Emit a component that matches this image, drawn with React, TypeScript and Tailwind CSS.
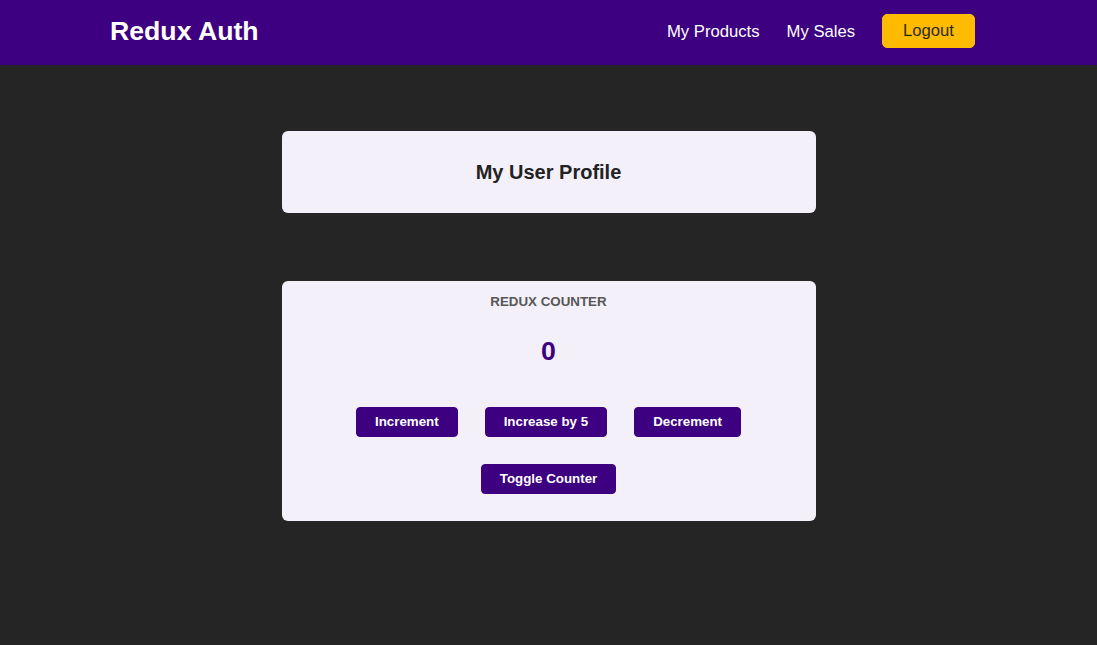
import { useState } from 'react';

export default function App() {
  const [counter, setCounter] = useState(0);
  const [showCounter, setShowCounter] = useState(true);

  return (
    <div className="min-h-screen bg-[#252525] font-['Liberation_Sans',Arial,sans-serif]">
      {/* Header */}
      <header className="h-[65px] w-full bg-[#3c0080] flex items-center justify-between pl-[110px] pr-[122px] pb-[3px]">
        <h1 className="text-[26.67px] font-bold text-white leading-none">Redux Auth</h1>
        <nav>
          <ul className="flex items-center gap-[27px]">
            <li>
              <a href="#" className="text-[16.67px] text-white">My Products</a>
            </li>
            <li>
              <a href="#" className="text-[16.67px] text-white">My Sales</a>
            </li>
            <li>
              <button className="h-[34px] px-[20px] bg-[#ffbb00] border border-[#ffbb00] rounded-[5px] text-[16.67px] text-[#2c2922] leading-none">
                Logout
              </button>
            </li>
          </ul>
        </nav>
      </header>

      <main className="flex flex-col items-center">
        {/* Profile */}
        <section className="mt-[66px] w-[534px] h-[82px] bg-[#f4f0fa] rounded-[6px] flex items-center justify-center">
          <h2 className="text-[20px] font-bold text-[#222] leading-none">My User Profile</h2>
        </section>

        {/* Counter */}
        <section className="mt-[68px] w-[534px] bg-[#f4f0fa] rounded-[6px] pt-[13px] pb-[27px] text-center">
          <h1 className="text-[13.33px] leading-[15px] font-bold uppercase text-[#575757]">Redux Counter</h1>
          <div className="mt-[27px] h-[31px] leading-[31px] text-[26.67px] font-bold text-[#3c0080]">
            {showCounter ? counter : ''}
          </div>
          <div className="mt-[40px] flex justify-center gap-[27px]">
            <button
              onClick={() => setCounter((c) => c + 1)}
              className="h-[30px] px-[18px] bg-[#3c0080] border border-[#3c0080] rounded-[4px] text-white text-[13.33px] font-bold leading-none"
            >
              Increment
            </button>
            <button
              onClick={() => setCounter((c) => c + 5)}
              className="h-[30px] px-[18px] bg-[#3c0080] border border-[#3c0080] rounded-[4px] text-white text-[13.33px] font-bold leading-none"
            >
              Increase by 5
            </button>
            <button
              onClick={() => setCounter((c) => c - 1)}
              className="h-[30px] px-[18px] bg-[#3c0080] border border-[#3c0080] rounded-[4px] text-white text-[13.33px] font-bold leading-none"
            >
              Decrement
            </button>
          </div>
          <div className="mt-[27px] flex justify-center">
            <button
              onClick={() => setShowCounter((s) => !s)}
              className="h-[30px] px-[18px] bg-[#3c0080] border border-[#3c0080] rounded-[4px] text-white text-[13.33px] font-bold leading-none"
            >
              Toggle Counter
            </button>
          </div>
        </section>
      </main>
    </div>
  );
}
